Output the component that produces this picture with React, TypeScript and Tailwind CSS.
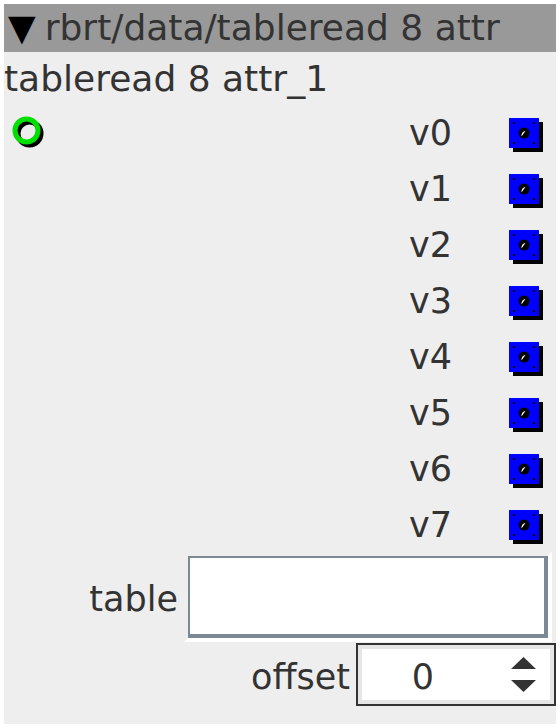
import React from "react";

function Ring() {
  return (
    <svg width="36" height="36" viewBox="0 0 36 36">
      <circle cx="18.5" cy="18.5" r="11.5" fill="none" stroke="#000" strokeWidth="5" />
      <circle cx="15.5" cy="15.5" r="11.5" fill="none" stroke="#00e000" strokeWidth="5" />
    </svg>
  );
}

function Port() {
  return (
    <svg width="36" height="36" viewBox="0 0 36 36">
      <rect x="4" y="4" width="30" height="30" fill="#000" />
      <rect x="0" y="0" width="30" height="30" fill="#0000ff" />
      <rect x="4" y="4" width="2" height="2" fill="#000" />
      <rect x="24" y="4" width="2" height="2" fill="#000" />
      <rect x="4" y="24" width="2" height="2" fill="#000" />
      <rect x="24" y="24" width="2" height="2" fill="#000" />
      <circle cx="15" cy="15" r="5.5" fill="#000" />
      <path d="M12.5 18.5 L16.5 12.8 A5 5 0 0 0 12.5 18.5 Z" fill="#fff" />
    </svg>
  );
}

export default function App() {
  const rows = ["v0", "v1", "v2", "v3", "v4", "v5", "v6", "v7"];
  return (
    <div
      className="m-1 w-[552px] h-[720px] bg-[#eeeeee] text-[#333333] flex flex-col"
      style={{ fontFamily: '"DejaVu Sans", sans-serif' }}
    >
      <div className="h-12 bg-[#999999] flex items-center pl-1 text-[36px] leading-none whitespace-nowrap">
        <span className="text-black">▼</span>
        <span className="ml-[9px]">rbrt/data/tableread 8 attr</span>
      </div>
      <div className="h-[53px] flex items-center pl-0 text-[36px] leading-none whitespace-nowrap">
        tableread 8 attr_1
      </div>
      <div className="flex flex-col">
        {rows.map((r, i) => (
          <div key={r} className="h-14 flex items-center">
            <div className="w-[405px] pl-[7px] flex items-center">
              {i === 0 ? <Ring /> : null}
            </div>
            <div className="w-[100px] text-[35px] leading-none">{r}</div>
            <div className="pt-[6px]">
              <Port />
            </div>
          </div>
        ))}
      </div>
      <div className="flex items-center mt-[-1px]">
        <div className="w-[180px] text-right pr-[6px] pt-[4px] text-[35px] leading-none">table</div>
        <div className="border-[4px] border-t-transparent border-l-transparent border-r-white border-b-white">
          <div className="w-[360px] h-[82px] bg-white border-t-2 border-l-2 border-b-4 border-r-4 border-[#7b8896]" />
        </div>
      </div>
      <div className="flex items-center mt-[1px]">
        <div className="w-[352px] text-right pr-[6px] pt-[5px] text-[35px] leading-none">offset</div>
        <div className="w-[200px] h-[63px] border-2 border-[#333333]">
          <div className="w-full h-full border-4 border-[#e6e6e6] bg-white flex items-center">
            <div className="w-[122px] text-center text-[35px] leading-none pt-[5px]">0</div>
            <div className="flex-1" />
            <div className="flex flex-col items-center gap-[11px] pr-[14px]">
              <svg width="25" height="12" viewBox="0 0 25 12">
                <path d="M12.5 0 L25 12 L0 12 Z" fill="#333333" />
              </svg>
              <svg width="25" height="12" viewBox="0 0 25 12">
                <path d="M0 0 L25 0 L12.5 12 Z" fill="#333333" />
              </svg>
            </div>
          </div>
        </div>
      </div>
    </div>
  );
}
